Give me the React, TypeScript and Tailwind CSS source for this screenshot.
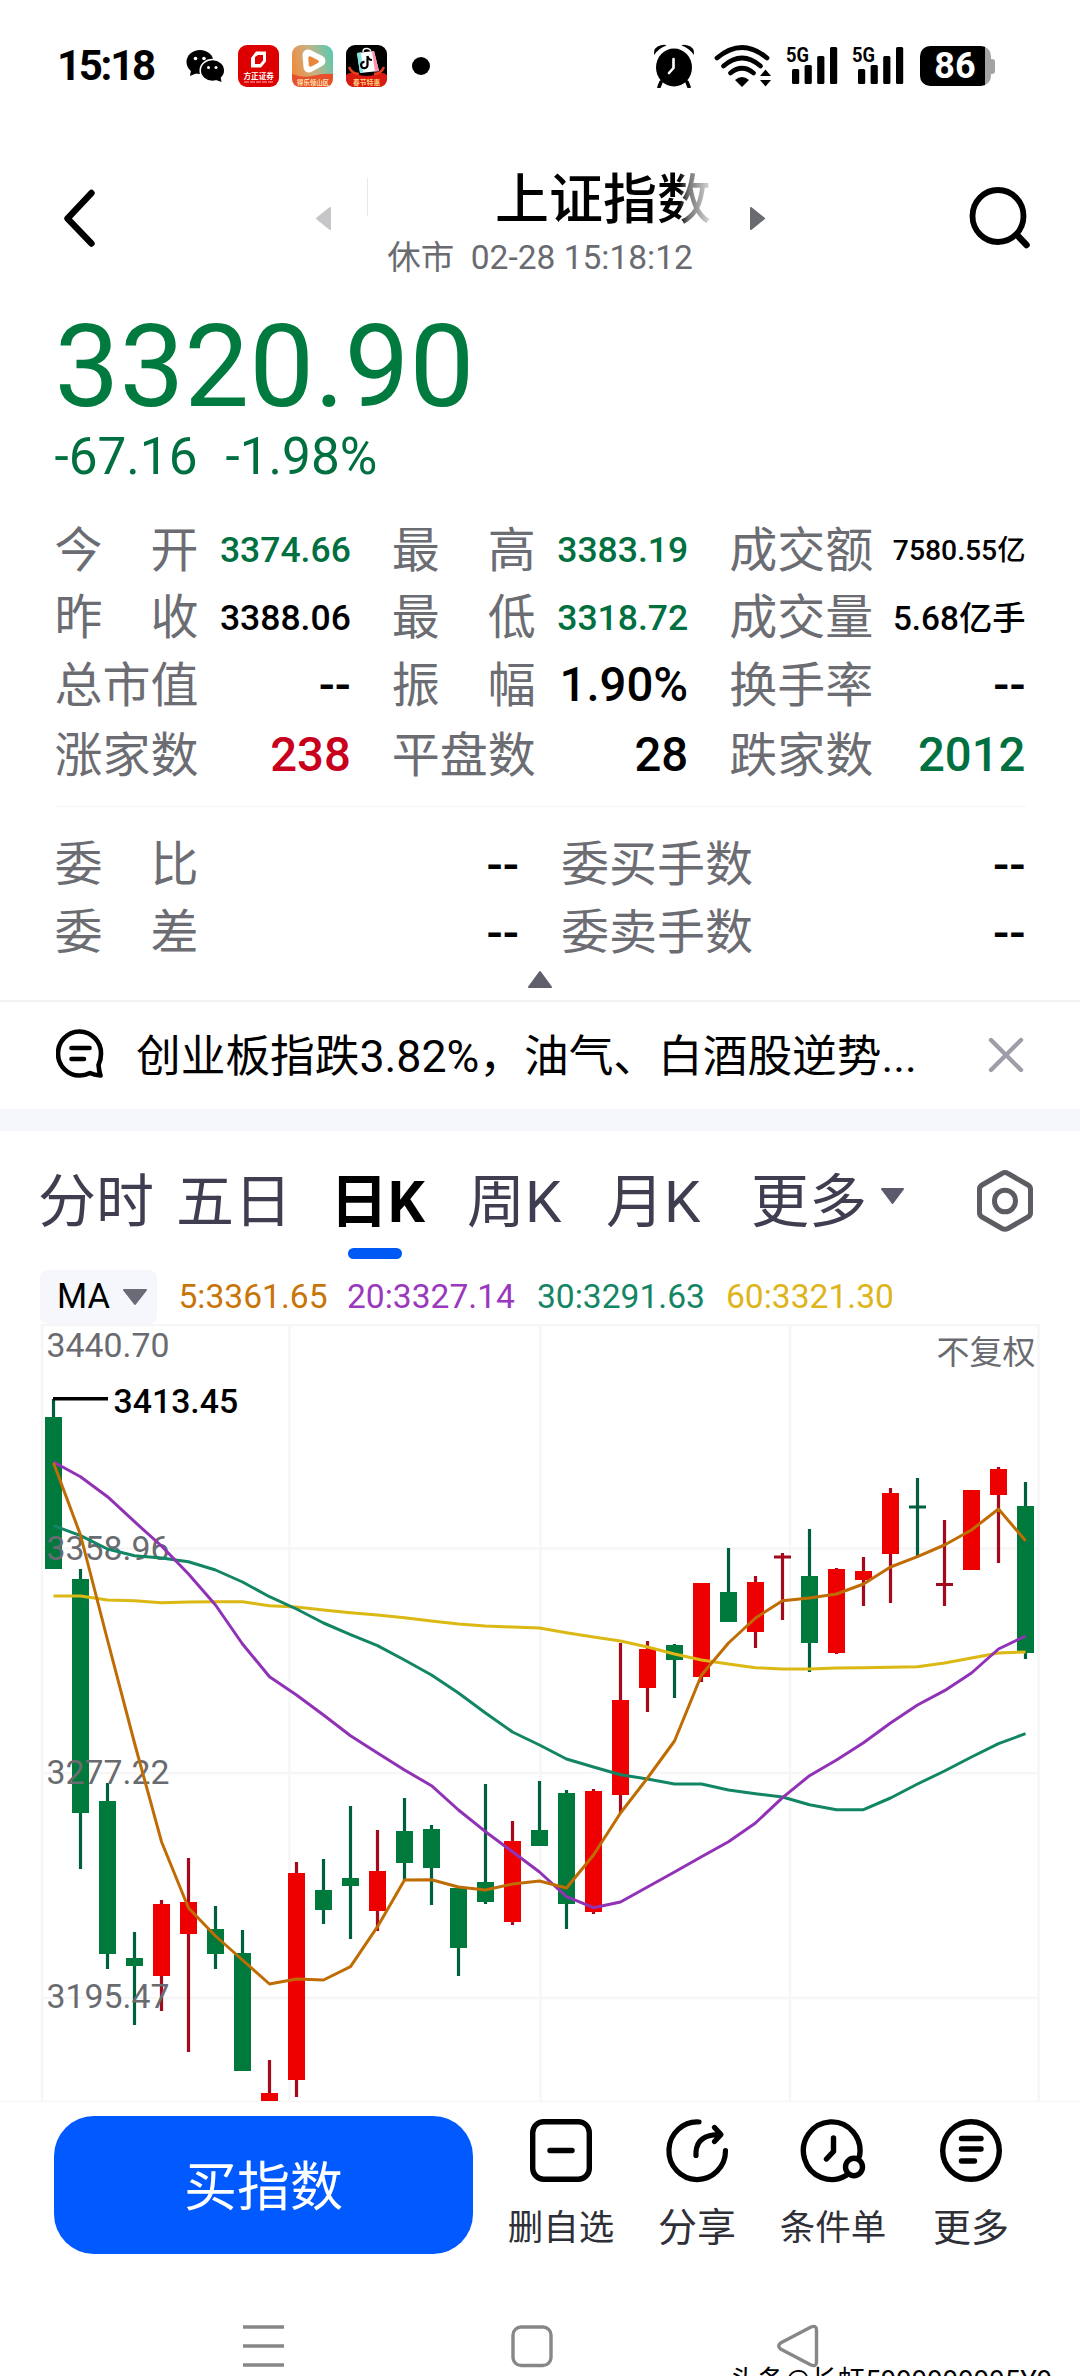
import React from "react";

type Tone = "up" | "down" | "flat";
type Candle = [up: 0 | 1, high: number, top: number, bottom: number, low: number];

const candles: Candle[] = [
  [0, 1399, 1417, 1569, 1569],
  [0, 1569, 1579, 1813, 1869],
  [0, 1783, 1801, 1954, 1969],
  [0, 1932, 1958, 1966, 2025],
  [1, 1900, 1904, 1976, 2011],
  [1, 1858, 1902, 1934, 2052],
  [0, 1906, 1929, 1954, 1969],
  [0, 1930, 1953, 2071, 2071],
  [1, 2060, 2093, 2101, 2101],
  [1, 1862, 1873, 2080, 2097],
  [0, 1859, 1890, 1910, 1924],
  [0, 1806, 1878, 1886, 1939],
  [1, 1830, 1871, 1911, 1931],
  [0, 1798, 1831, 1863, 1880],
  [0, 1825, 1829, 1868, 1905],
  [0, 1887, 1888, 1948, 1976],
  [0, 1784, 1882, 1902, 1904],
  [1, 1821, 1841, 1922, 1925],
  [0, 1781, 1830, 1846, 1846],
  [0, 1790, 1793, 1904, 1929],
  [1, 1789, 1791, 1912, 1914],
  [1, 1643, 1700, 1795, 1813],
  [1, 1641, 1649, 1688, 1712],
  [0, 1644, 1645, 1660, 1698],
  [1, 1583, 1583, 1677, 1682],
  [0, 1548, 1592, 1622, 1622],
  [1, 1576, 1582, 1632, 1648],
  [1, 1553, 1555.5, 1558.5, 1620],
  [0, 1529, 1576, 1643, 1672],
  [1, 1568, 1569, 1653, 1654],
  [1, 1557, 1571, 1580, 1606],
  [1, 1488, 1493, 1554, 1603],
  [0, 1478, 1505.5, 1508.5, 1557],
  [1, 1520, 1583, 1586, 1606],
  [1, 1490, 1490, 1570, 1570],
  [1, 1467, 1469, 1495, 1563],
  [0, 1482, 1506, 1653, 1659],
];

const averages: { color: string; values: number[] }[] = [
  {
    color: "#dcb814",
    values: [1596, 1596, 1600, 1600.7, 1602.7, 1602, 1601.7, 1601.7, 1605.7, 1607, 1610, 1612.7, 1615, 1617.7, 1621, 1624, 1626, 1627, 1628, 1632.7, 1637, 1641, 1647, 1654, 1660, 1664, 1667.7, 1669, 1669, 1668, 1667.7, 1667.3, 1666.7, 1663, 1658, 1653, 1652],
  },
  {
    color: "#128565",
    values: [1525.7, 1535.7, 1549, 1555.7, 1558, 1561.7, 1570, 1582, 1596.7, 1609, 1623, 1634.7, 1645.7, 1660, 1675, 1693, 1713, 1732, 1745, 1759, 1767, 1774.7, 1779, 1784, 1784, 1790, 1793.7, 1797, 1804.7, 1809.7, 1809.7, 1798, 1784, 1771, 1757, 1743.7, 1733.7],
  },
  {
    color: "#9132b6",
    values: [1462, 1476.7, 1496.7, 1521.7, 1546, 1574, 1605, 1644, 1676.7, 1695, 1715, 1735.7, 1753, 1770, 1785.7, 1810, 1831.7, 1851.7, 1872, 1896.7, 1907.7, 1902, 1887, 1872, 1856.7, 1841.7, 1823, 1797.7, 1775.7, 1760, 1742.7, 1723, 1705, 1690.7, 1673, 1649, 1636],
  },
  {
    color: "#c06c04",
    values: [1462.7, 1535, 1640, 1743, 1841.7, 1908, 1936, 1960, 1984, 1979, 1980, 1966.7, 1926.7, 1880, 1879.7, 1887, 1890, 1884, 1881, 1888, 1855, 1813, 1778, 1741, 1675, 1643, 1618, 1600.7, 1598, 1594, 1584, 1567, 1556.7, 1545, 1530, 1509, 1540.7],
  },
];

const xAt = (i: number) => 53.5 + 27 * i;

function Chart() {
  return (
    <svg className="block h-[778px] w-[1080px]" viewBox="0 1324 1080 778">
      <g stroke="#f6f6f7" strokeWidth="2.5">
        <path d="M41 1325H1039M41 1548.5H1039M41 1773H1039M41 1998H1039" />
        <path d="M42 1324V2101M289.5 1324V2101M540.5 1324V2101M790 1324V2101M1038.5 1324V2101" />
        <path d="M0 2101.500H1080" strokeWidth="1.5" />
      </g>
      {candles.map(([up, high, top, bottom, low], i) => (
        <g key={i}>
          <rect x={xAt(i) - 1.6} y={high} width="3.2" height={low - high} fill={up ? "#a30a1e" : "#005f3d"} />
          <rect x={xAt(i) - 8.5} y={top} width="17" height={bottom - top} fill={up ? (bottom - top < 4 ? "#a30a1e" : "#ee0000") : bottom - top < 4 ? "#005f3d" : "#007a3c"} />
        </g>
      ))}
      <path d="M53 1398.700H108" stroke="#000" strokeWidth="3.4" />
      <g fontFamily="Roboto" fontSize="33.8" fill="#6a6b70">
        <text x="46.5" y="1356.5">3440.70</text>
        <text x="46.5" y="1559.5">3358.96</text>
        <text x="46.5" y="1783.5">3277.22</text>
        <text x="46.5" y="2008">3195.47</text>
        <text x="113.500" y="1413" fill="#000" fontWeight="500">3413.45</text>
        <text x="936.5" y="1364" fontFamily="'Noto Sans CJK SC'" fontSize="33">不复权</text>
      </g>
      {averages.map(({ color, values }) => (
        <polyline key={color} fill="none" stroke={color} strokeWidth="3" strokeLinejoin="round" points={values.map((y, i) => `${xAt(i)},${y}`).join(" ")} />
      ))}
    </svg>
  );
}

function Signal() {
  return (
    <svg className="block h-[44px] w-[52px]" viewBox="0 0 52 44">
      <text x="0" y="18" fontFamily="Roboto" fontWeight="700" fontSize="21" textLength="23" lengthAdjust="spacingAndGlyphs">5G</text>
      <rect x="6" y="25" width="7.2" height="15" rx="1.5" />
      <rect x="18.6" y="21" width="7.2" height="19" rx="1.5" />
      <rect x="31.2" y="12" width="7.2" height="28" rx="1.5" />
      <rect x="44" y="3" width="7.2" height="37" rx="1.5" />
    </svg>
  );
}

function StatusBar() {
  return (
    <div className="flex h-[132px] shrink-0 items-center pl-[57px]">
      <span className="w-[129px] text-[42px] leading-none font-bold tracking-[-2.3px]">15:18</span>
      <svg className="h-[34px] w-[38px]" viewBox="0 0 38 34">
        <ellipse cx="14" cy="13" rx="13.5" ry="12" />
        <path d="M5 21l-1 6 7-3z" />
        <ellipse cx="26.5" cy="21.5" rx="12.3" ry="11" stroke="#fff" strokeWidth="1.6" />
        <path d="M30 31l5.500 2-1-5z" />
        <g fill="#fff">
          <circle cx="9.500" cy="9.500" r="1.800" />
          <circle cx="18" cy="9.500" r="1.800" />
          <circle cx="22.500" cy="18.500" r="1.500" />
          <circle cx="30" cy="18.500" r="1.500" />
        </g>
      </svg>
      <svg className="ml-[14px] h-[42px] w-[41px]" viewBox="0 0 41 42">
        <rect width="41" height="42" rx="9" fill="#dc0000" />
        <path d="M13 13l5-6.500h10v10l-5 6H13zM17 12v7h5l3-3.500V10h-5z" fill="#fff" fillRule="evenodd" />
        <text x="5.500" y="33.500" fontFamily="'Noto Sans CJK SC'" fontWeight="700" fontSize="7.600" fill="#fff">方正证券</text>
        <path d="M6 37H35" stroke="#ffb0b0" strokeWidth="1" strokeDasharray="5 1" />
      </svg>
      <svg className="ml-[12.500px] h-[42px] w-[41px]" viewBox="0 0 41 42">
        <defs>
          <linearGradient id="play" x1="0" y1="0.600" x2="1" y2="0.300">
            <stop offset="0" stopColor="#f08a3c" />
            <stop offset="0.500" stopColor="#c9b183" />
            <stop offset="1" stopColor="#5cc9b0" />
          </linearGradient>
        </defs>
        <rect width="41" height="42" rx="9" fill="url(#play)" />
        <path d="M0 29q10 4 20 2q12-3 21-2v4q0 9-9 9H9q-9 0-9-9z" fill="#e8502c" />
        <path d="M16 10L28 16L17 22z" fill="#fff" stroke="#fff" strokeWidth="11" strokeLinejoin="round" />
        <path d="M18 13L25 16.500L18.500 20z" fill="#e8873c" stroke="#e8873c" strokeWidth="3.500" strokeLinejoin="round" />
        <text x="5" y="40" fontFamily="'Noto Sans CJK SC'" fontWeight="700" fontSize="6.400" fill="#ffe3b0">得乐领山区</text>
      </svg>
      <svg className="ml-[13px] h-[42px] w-[41px]" viewBox="0 0 41 42">
        <rect width="41" height="42" rx="9" fill="#000" />
        <path d="M11 8l17-2 5 20-19 2z" fill="#fff" />
        <path d="M11 8l4-.500 2 20-3 .500z" fill="#7fe6e6" />
        <path d="M26 6l2 0 5 20-4 .500z" fill="#ff8fa8" />
        <path d="M17 7q0-4 4-3.500t3.500 3" fill="none" stroke="#fff" strokeWidth="1.400" />
        <path d="M21.500 11v9a3.200 3.200 0 1 1-3-3.200M21.500 11q1 4 4.500 4" fill="none" stroke="#000" strokeWidth="2.200" />
        <path d="M0 30q5-4 11-1q9 4 20 0q5-3 10 1v3q0 9-9 9H9q-9 0-9-9z" fill="#d81a10" />
        <path d="M3 22q3 7 10 7M38 22q-3 7-10 7" fill="none" stroke="#e8401c" strokeWidth="2.500" />
        <text x="7" y="40" fontFamily="'Noto Sans CJK SC'" fontWeight="700" fontSize="6.800" fill="#ffd27a">春节特惠</text>
      </svg>
      <span className="ml-[25px] size-[18px] rounded-full bg-black" />
      <svg className="ml-[223px] h-[44px] w-[42px]" viewBox="0 0 42 44">
        <path d="M1 11Q0 3 8 1.200Q12 0 13.500 1.500Q6 4 1 11zM41 11Q42 3 34 1.200Q30 0 28.500 1.500Q36 4 41 11z" />
        <ellipse cx="21" cy="23.500" rx="18" ry="19" />
        <path d="M8 38l-2 5M34 38l2 5" stroke="#000" strokeWidth="3.500" strokeLinecap="round" />
        <path d="M20.500 15v9l-4.500 5" fill="none" stroke="#fff" strokeWidth="2.600" strokeLinecap="round" strokeLinejoin="round" />
      </svg>
      <svg className="ml-[19px] h-[44px] w-[58px]" viewBox="0 0 58 44">
        <g fill="none" stroke="#000" strokeWidth="4.800" strokeLinecap="round">
          <path d="M3 14Q28 -7 53 14" />
          <path d="M9.500 22Q28 6 46.500 22" />
          <path d="M16.500 29Q28 19.500 39.500 29" />
        </g>
        <path d="M21 36Q28 30 35 36L28 43z" />
        <path d="M46 32l5.500-6.500L57 32zM46 36h11l-5.500 6.500z" />
      </svg>
      <span className="ml-[14px]"><Signal /></span>
      <span className="ml-[14px]"><Signal /></span>
      <span className="ml-[16px] flex h-[40px] w-[71px] items-center justify-center rounded-[10px] bg-[linear-gradient(90deg,#000_65px,#a3a3a3_65px)] text-[36px] leading-none font-bold text-white">86</span>
      <span className="h-[15px] w-[4px] rounded-r-[3px] bg-[#a3a3a3]" />
    </div>
  );
}

function Header() {
  return (
    <header className="flex h-[174px] shrink-0 items-center">
      <svg className="ml-[62px] h-[60px] w-[34px]" viewBox="0 0 34 60" fill="none" stroke="#000" strokeWidth="6.400" strokeLinecap="round" strokeLinejoin="round">
        <path d="M29.500 4L5.500 29.500L29.500 54.500" />
      </svg>
      <svg className="mt-[-1px] ml-[219px] h-[25px] w-[17px]" viewBox="0 0 17 25">
        <path d="M15 2v21L2 12.500z" fill="#c6c6c8" stroke="#c6c6c8" strokeWidth="2" strokeLinejoin="round" />
      </svg>
      <div className="ml-[35px] flex h-[140px] w-[346px] flex-col pt-[19px]">
        <div className="h-[60px] bg-[linear-gradient(#e9e9e9,#e9e9e9)] bg-[length:1px_38px] bg-[position:0_10px] bg-no-repeat pr-[2px] text-right">
          <h1 className="inline-block bg-[linear-gradient(90deg,#000_184px,#777_194px,#ddd_216px)] bg-clip-text text-[54px] leading-[66px] font-medium text-transparent">上证指数</h1>
        </div>
        <p className="h-[59px] text-center text-[33.500px] leading-[59px] whitespace-nowrap text-[#6a6b70]">休市&nbsp; 02-28 15:18:12</p>
      </div>
      <svg className="mt-[-1px] ml-[36px] h-[25px] w-[17px]" viewBox="0 0 17 25">
        <path d="M2 2v21L15 12.500z" fill="#6a6b70" stroke="#6a6b70" strokeWidth="2" strokeLinejoin="round" />
      </svg>
      <svg className="mt-[-2px] ml-[201px] h-[66px] w-[66px]" viewBox="0 0 66 66" fill="none" stroke="#000" strokeWidth="5.800" strokeLinecap="round">
        <ellipse cx="31" cy="31" rx="25.500" ry="26" />
        <path d="M50 50L59.500 60" strokeWidth="6.500" />
      </svg>
    </header>
  );
}

const toneClass: Record<Tone, string> = { up: "text-[#c8001e]", down: "text-[#007040]", flat: "text-black" };

const stats: { label: string; value: string; tone: Tone; size: string }[] = [
  { label: "今开", value: "3374.66", tone: "down", size: "text-[35.500px]" },
  { label: "最高", value: "3383.19", tone: "down", size: "text-[35.500px]" },
  { label: "成交额", value: "7580.55亿", tone: "flat", size: "text-[28.300px]" },
  { label: "昨收", value: "3388.06", tone: "flat", size: "text-[35.500px]" },
  { label: "最低", value: "3318.72", tone: "down", size: "text-[35.500px]" },
  { label: "成交量", value: "5.68亿手", tone: "flat", size: "text-[33.300px]" },
  { label: "总市值", value: "--", tone: "flat", size: "text-[47.300px]" },
  { label: "振幅", value: "1.90%", tone: "flat", size: "text-[47.300px]" },
  { label: "换手率", value: "--", tone: "flat", size: "text-[47.300px]" },
  { label: "涨家数", value: "238", tone: "up", size: "text-[47.300px]" },
  { label: "平盘数", value: "28", tone: "flat", size: "text-[47.300px]" },
  { label: "跌家数", value: "2012", tone: "down", size: "text-[47.300px]" },
];

function Label({ text }: { text: string }) {
  return (
    <span className="flex min-w-[144px] justify-between text-[#6c6d73]">
      {text.split("").map((c, i) => (
        <span key={i}>{c}</span>
      ))}
    </span>
  );
}

function Quote() {
  return (
    <section className="shrink-0 px-[54.500px]">
      <div className="h-[118px] pt-[2px] text-[115.500px] leading-[118px] text-[#007a3e]">3320.90</div>
      <div className="flex h-[62px] gap-[28px] pt-[1.500px] text-[51.300px] leading-[62px] text-[#007040]">
        <span>-67.16</span>
        <span>-1.98%</span>
      </div>
      <div className="mt-[31px] grid grid-cols-3 grid-rows-[67.500px_67.500px_67.500px_73px] gap-x-[41px] text-[48px]">
        {stats.map((s) => (
          <div key={s.label} className="flex items-center justify-between leading-none">
            <Label text={s.label} />
            <span className={`font-medium whitespace-nowrap ${s.size} ${toneClass[s.tone]}`}>{s.value}</span>
          </div>
        ))}
      </div>
      <div className="mt-[13px] h-px bg-[#f5f5f7]" />
      <div className="mt-[25px] grid grid-cols-2 gap-x-[42px] text-[48px] leading-none">
        {["委比", "委买手数", "委差", "委卖手数"].map((label) => (
          <div key={label} className="flex h-[67.500px] items-center justify-between">
            <Label text={label} />
            <span className="font-medium">--</span>
          </div>
        ))}
      </div>
      <svg className="mx-auto mt-[3px] block h-[30px] w-[26px]" viewBox="0 0 26 30">
        <path d="M13 2L24 17H2z" fill="#5f606b" stroke="#5f606b" strokeWidth="2" strokeLinejoin="round" />
      </svg>
    </section>
  );
}

function News() {
  return (
    <section className="flex h-[109px] shrink-0 items-center border-t-2 border-[#f2f2f4] pl-[56px]">
      <svg className="mt-[-2px] h-[50px] w-[48px]" viewBox="0 0 48 50" fill="none" stroke="#000" strokeWidth="4.600" strokeLinecap="round" strokeLinejoin="round">
        <path d="M44.500 46.500Q38 46 34 44Q29 46.500 24 46.500A21.500 22 0 1 1 45 25Q45 31 42.500 36Q43 42 44.500 46.500z" />
        <path d="M15.500 19H33.500M15.500 30H28" />
      </svg>
      <p className="mt-[5px] ml-[32px] w-[852px] text-[44.700px] leading-none whitespace-nowrap">创业板指跌3.82%，油气、白酒股逆势...</p>
      <svg className="h-[36px] w-[36px]" viewBox="0 0 36 36" stroke="#9d9ea8" strokeWidth="4.400" strokeLinecap="round">
        <path d="M3 3L33 33M33 3L3 33" />
      </svg>
    </section>
  );
}

function Tabs() {
  return (
    <nav className="flex h-[134px] shrink-0 pt-[41px] pl-[38px] text-[58px] leading-[60px] whitespace-nowrap text-[#3e3e50]">
      <span className="w-[138px]">分时</span>
      <span className="w-[154px]">五日</span>
      <span className="w-[137px] font-bold text-black">
        日K
        <span className="mt-[16px] ml-[18px] block h-[11px] w-[54px] rounded-full bg-[#0059f5]" />
      </span>
      <span className="w-[139px]">周K</span>
      <span className="w-[145px]">月K</span>
      <span className="w-[129px]">更多</span>
      <svg className="mt-[15px] h-[18px] w-[25px]" viewBox="0 0 25 18">
        <path d="M2 2H23L12.500 16z" fill="#5a5a6c" stroke="#5a5a6c" strokeWidth="2" strokeLinejoin="round" />
      </svg>
      <svg className="mt-[-4px] ml-[70px] h-[66px] w-[60px]" viewBox="0 0 60 66" fill="none" stroke="#5c5d63" strokeWidth="5" strokeLinejoin="round">
        <path d="M30 4.500Q31.500 4.500 33 5.500L53 17Q55.500 18.500 55.500 21V45Q55.500 47.500 53 49L33 60.500Q30 62 27 60.500L7 49Q4.500 47.500 4.500 45V21Q4.500 18.500 7 17L27 5.500Q28.500 4.500 30 4.500z" />
        <ellipse cx="30" cy="33" rx="10.500" ry="10.800" />
      </svg>
    </nav>
  );
}

function Legend() {
  return (
    <div className="mt-[5px] flex h-[54px] shrink-0 items-center pl-[40px] text-[33.600px] leading-none">
      <span className="flex h-full w-[138.500px] items-center">
        <span className="flex h-full w-[117px] items-center gap-[12px] rounded-[8px] bg-[#f5f7fc] pl-[17px] text-[34.500px]">
          MA
          <svg className="h-[18px] w-[26px]" viewBox="0 0 26 18">
            <path d="M2 2H24L13 16z" fill="#6a6b76" stroke="#6a6b76" strokeWidth="2" strokeLinejoin="round" />
          </svg>
        </span>
      </span>
      <span className="w-[168.500px] text-[#c87406]">5:3361.65</span>
      <span className="w-[190px] text-[#9a38be]">20:3327.14</span>
      <span className="w-[189px] text-[#148565]">30:3291.63</span>
      <span className="text-[#deb41a]">60:3321.30</span>
    </div>
  );
}

function ActionBar() {
  const icon = "block h-[68px] w-[70px]";
  return (
    <footer className="flex h-[196px] shrink-0 pl-[54px] text-[#2f2f38]">
      <button className="mt-[14px] h-[138px] w-[419px] rounded-[40px] bg-[#005aff] pt-[7px] text-[53px] leading-none text-white">买指数</button>
      <div className="mt-[14px] ml-[20px] flex leading-none">
        <div className="flex w-[136px] flex-col items-center text-[35.500px]">
          <svg className={icon} viewBox="0 0 70 68" fill="none" stroke="#000" strokeWidth="5.400" strokeLinecap="round">
            <rect x="6.700" y="5.700" width="56.600" height="57.500" rx="11" />
            <path d="M24 34.500H46" />
          </svg>
          <span className="mt-[27px]">删自选</span>
        </div>
        <div className="flex w-[136px] flex-col items-center text-[39px]">
          <svg className={icon} viewBox="0 0 70 68" fill="none" stroke="#000" strokeWidth="5.200" strokeLinecap="round" strokeLinejoin="round">
            <path d="M37 6A28.300 28.800 0 1 0 63.500 34.500" />
            <path d="M34 39.500V36Q35 18.500 58 18.500M52.500 11.500L59 18.500L52.500 25.500" />
          </svg>
          <span className="mt-[25px]">分享</span>
        </div>
        <div className="flex w-[136px] flex-col items-center text-[35.500px]">
          <svg className={icon} viewBox="0 0 70 68" fill="none" stroke="#000" strokeWidth="5.400" strokeLinecap="round" strokeLinejoin="round">
            <path d="M61.500 40A28.300 28.800 0 1 0 48 59.500" />
            <path d="M35.500 22V35.500L28.500 43" />
            <ellipse cx="56" cy="51" rx="8.500" ry="8.800" />
          </svg>
          <span className="mt-[27px]">条件单</span>
        </div>
        <div className="flex w-[140px] flex-col items-center text-[38px]">
          <svg className={icon} viewBox="0 0 70 68" fill="none" stroke="#000" strokeWidth="5.400" strokeLinecap="round">
            <ellipse cx="35" cy="34.500" rx="28.300" ry="28.800" />
            <path d="M25.500 22.500H45M25.500 33H45M25.500 45H38.500" />
          </svg>
          <span className="mt-[25px]">更多</span>
        </div>
      </div>
    </footer>
  );
}

function SystemNav() {
  return (
    <div className="relative flex h-[78px] shrink-0 items-start pt-[24px] pl-[242px]">
      <svg className="h-[46px] w-[43px]" viewBox="0 0 43 46" stroke="#878787" strokeWidth="3.400">
        <path d="M1 5H42M1 24H42M1 43H42" />
      </svg>
      <svg className="ml-[225px] h-[46px] w-[44px]" viewBox="0 0 44 46" fill="none" stroke="#878787" strokeWidth="3.400">
        <rect x="3" y="5" width="38" height="38.500" rx="8" />
      </svg>
      <svg className="ml-[223px] h-[46px] w-[44px]" viewBox="0 0 44 46" fill="none" stroke="#878787" strokeWidth="3.400" strokeLinejoin="round">
        <path d="M3.500 21L34 5Q39.500 3 39.500 8V40Q39.500 45 34 43L3.500 27Q0 24 3.500 21z" />
      </svg>
      <span className="absolute top-[69px] left-[730px] text-[27.600px] leading-none whitespace-nowrap">头条@长虹5999999995Y9</span>
    </div>
  );
}

export default function App() {
  return (
    <main className="flex h-[2376px] w-[1080px] flex-col overflow-hidden bg-white font-[Roboto,'Noto_Sans_CJK_SC',sans-serif] text-black">
      <StatusBar />
      <Header />
      <Quote />
      <News />
      <div className="h-[22px] shrink-0 bg-[#f6f7fc]" />
      <Tabs />
      <Legend />
      <div className="shrink-0"><Chart /></div>
      <ActionBar />
      <SystemNav />
    </main>
  );
}
